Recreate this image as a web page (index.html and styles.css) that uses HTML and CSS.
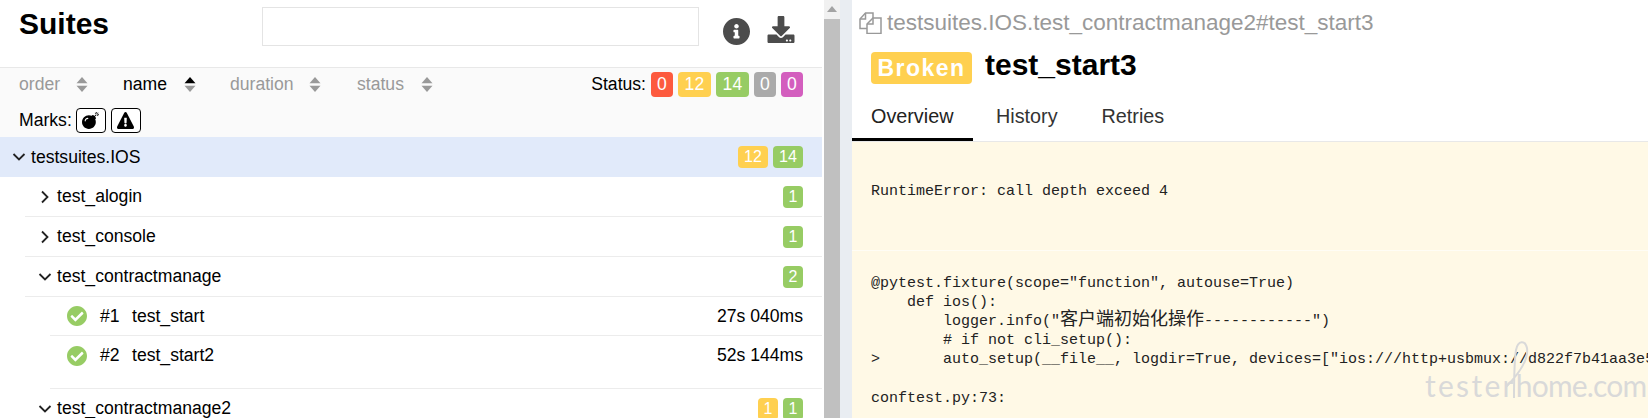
FILE: index.html
```html
<!DOCTYPE html>
<html lang="en">
<head>
<meta charset="utf-8">
<title>Suites</title>
<link rel="stylesheet" href="styles.css">
</head>
<body>
<div class="app">
  <section class="left">
    <header class="head">
      <h1 class="suites">Suites</h1>
      <div class="search"></div>
      <svg class="ic-info" viewBox="8 8 496 496"><path d="M256 8C119.043 8 8 119.083 8 256c0 136.997 111.043 248 248 248s248-111.003 248-248C504 119.083 392.957 8 256 8zm0 110c23.196 0 42 18.804 42 42s-18.804 42-42 42-42-18.804-42-42 18.804-42 42-42zm56 254c0 6.627-5.373 12-12 12h-88c-6.627 0-12-5.373-12-12v-24c0-6.627 5.373-12 12-12h12v-64h-12c-6.627 0-12-5.373-12-12v-24c0-6.627 5.373-12 12-12h64c6.627 0 12 5.373 12 12v100h12c6.627 0 12 5.373 12 12v24z"/></svg>
      <svg class="ic-down" viewBox="0 0 512 512"><path d="M216 0h80c13.3 0 24 10.7 24 24v168h87.7c17.8 0 26.7 21.5 14.1 34.1L269.7 378.3c-7.5 7.5-19.8 7.5-27.3 0L90.1 226.1c-12.6-12.6-3.7-34.1 14.1-34.1H192V24c0-13.3 10.7-24 24-24zm296 376v112c0 13.3-10.7 24-24 24H24c-13.3 0-24-10.7-24-24V376c0-13.3 10.7-24 24-24h146.7l49 49c20.1 20.1 52.5 20.1 72.6 0l49-49H488c13.3 0 24 10.7 24 24zm-124 88c0-11-9-20-20-20s-20 9-20 20 9 20 20 20 20-9 20-20zm64 0c0-11-9-20-20-20s-20 9-20 20 9 20 20 20 20-9 20-20z"/></svg>
    </header>
    <div class="filters">
      <div class="sortrow">
        <span class="sort s-order">order<svg class="arr" viewBox="0 0 12 15"><path d="M6 0l5.500 6.300H.5z"/><path d="M6 15L.5 8.700h11z"/></svg></span>
        <span class="sort s-name active">name<svg class="arr" viewBox="0 0 12 15"><path class="up" d="M6 0l5.500 6.300H.5z"/><path d="M6 15L.5 8.700h11z"/></svg></span>
        <span class="sort s-dur">duration<svg class="arr" viewBox="0 0 12 15"><path d="M6 0l5.500 6.300H.5z"/><path d="M6 15L.5 8.700h11z"/></svg></span>
        <span class="sort s-status">status<svg class="arr" viewBox="0 0 12 15"><path d="M6 0l5.500 6.300H.5z"/><path d="M6 15L.5 8.700h11z"/></svg></span>
        <div class="statuses">
          <span class="status-label">Status:</span>
          <span class="pill big red">0</span>
          <span class="pill big wide yellow">12</span>
          <span class="pill big wide green">14</span>
          <span class="pill big grey">0</span>
          <span class="pill big pink">0</span>
        </div>
      </div>
      <div class="marks">
        <span>Marks:</span>
        <span class="mark"><svg viewBox="0 0 512 512"><path d="M440.5 88.500l-52 52L415 167c9.400 9.400 9.400 24.600 0 33.900l-17.400 17.400c11.800 26.100 18.400 55.100 18.400 85.600 0 114.900-93.100 208-208 208S0 418.900 0 304 93.100 96 208 96c30.500 0 59.500 6.600 85.600 18.400L311 97c9.400-9.400 24.600-9.400 33.900 0l26.500 26.500 52-52 17.100 17zM500 60h-24c-6.600 0-12 5.400-12 12s5.400 12 12 12h24c6.600 0 12-5.400 12-12s-5.400-12-12-12zM440 0c-6.600 0-12 5.400-12 12v24c0 6.600 5.400 12 12 12s12-5.400 12-12V12c0-6.600-5.400-12-12-12zm33.900 55l17-17c4.700-4.700 4.700-12.300 0-17-4.700-4.700-12.300-4.700-17 0l-17 17c-4.700 4.700-4.700 12.300 0 17 4.800 4.700 12.400 4.700 17 0zm-67.800 0c4.700 4.700 12.300 4.700 17 0 4.700-4.700 4.700-12.300 0-17l-17-17c-4.700-4.700-12.300-4.700-17 0-4.700 4.700-4.700 12.300 0 17l17 17zm67.800 34c-4.700-4.700-12.300-4.700-17 0-4.700 4.700-4.700 12.300 0 17l17 17c4.700 4.700 12.300 4.700 17 0 4.700-4.700 4.700-12.300 0-17l-17-17zM112 272c0-35.300 28.700-64 64-64 8.800 0 16-7.200 16-16s-7.200-16-16-16c-52.900 0-96 43.100-96 96 0 8.800 7.200 16 16 16s16-7.200 16-16z"/></svg></span>
        <span class="mark"><svg viewBox="0 0 576 512" preserveAspectRatio="none"><path d="M569.517 440.013C587.975 472.007 564.806 512 527.94 512H48.054c-36.937 0-59.999-40.055-41.577-71.987L246.423 23.985c18.467-32.009 64.72-31.951 83.154 0l239.94 416.028zM288 354c-25.405 0-46 20.595-46 46s20.595 46 46 46 46-20.595 46-46-20.595-46-46-46zm-43.673-165.346l7.418 136c.347 6.364 5.609 11.346 11.982 11.346h48.546c6.373 0 11.635-4.982 11.982-11.346l7.418-136c.375-6.874-5.098-12.654-11.982-12.654h-63.383c-6.884 0-12.356 5.78-11.981 12.654z"/></svg></span>
      </div>
    </div>
    <div class="tree">
      <div class="row root">
        <svg class="chev" viewBox="0 0 14 14"><path d="M1.500 4l5.500 5.500L12.500 4"/></svg>
        <span class="name">testsuites.IOS</span>
        <span class="pill wide yellow">12</span><span class="pill wide green">14</span>
      </div>
      <div class="level1">
        <div class="row">
          <svg class="chev" viewBox="0 0 14 14"><path d="M4 1.500L9.500 7 4 12.500"/></svg>
          <span class="name">test_alogin</span><span class="pill green">1</span>
        </div>
        <div class="row">
          <svg class="chev" viewBox="0 0 14 14"><path d="M4 1.500L9.500 7 4 12.500"/></svg>
          <span class="name">test_console</span><span class="pill green">1</span>
        </div>
        <div class="row">
          <svg class="chev" viewBox="0 0 14 14"><path d="M1.500 4l5.500 5.500L12.500 4"/></svg>
          <span class="name">test_contractmanage</span><span class="pill green">2</span>
        </div>
        <div class="cases">
          <div class="case">
            <svg class="check" viewBox="8 8 496 496"><path d="M504 256c0 136.967-111.033 248-248 248S8 392.967 8 256 119.033 8 256 8s248 111.033 248 248zM227.314 387.314l184-184c6.248-6.248 6.248-16.379 0-22.627l-22.627-22.627c-6.248-6.249-16.379-6.249-22.628 0L216 308.118l-70.059-70.059c-6.248-6.248-16.379-6.248-22.628 0l-22.627 22.627c-6.248 6.248-6.248 16.379 0 22.627l104 104c6.249 6.249 16.379 6.249 22.628.001z"/></svg>
            <span class="num">#1</span><span class="name">test_start</span><span class="time">27s 040ms</span>
          </div>
          <div class="case last">
            <svg class="check" viewBox="8 8 496 496"><path d="M504 256c0 136.967-111.033 248-248 248S8 392.967 8 256 119.033 8 256 8s248 111.033 248 248zM227.314 387.314l184-184c6.248-6.248 6.248-16.379 0-22.627l-22.627-22.627c-6.248-6.249-16.379-6.249-22.628 0L216 308.118l-70.059-70.059c-6.248-6.248-16.379-6.248-22.628 0l-22.627 22.627c-6.248 6.248-6.248 16.379 0 22.627l104 104c6.249 6.249 16.379 6.249 22.628.001z"/></svg>
            <span class="num">#2</span><span class="name">test_start2</span><span class="time">52s 144ms</span>
          </div>
        </div>
        <div class="row">
          <svg class="chev" viewBox="0 0 14 14"><path d="M1.500 4l5.500 5.500L12.500 4"/></svg>
          <span class="name">test_contractmanage2</span><span class="pill yellow">1</span><span class="pill green">1</span>
        </div>
      </div>
    </div>
  </section>
  <div class="scrollbar"><span class="sb-up"></span><span class="sb-thumb"></span></div>
  <div class="gutter"></div>
  <section class="right">
    <div class="path">
      <svg class="ic-copy" viewBox="0 0 23 22"><path d="M8 16.500H1V7l5.500-6H14v5"/><path d="M6.500 1v6H1"/><path d="M14 6h8v15.500H8V12z"/><path d="M14 6v6H8"/></svg>
      <span>testsuites.IOS.test_contractmanage2#test_start3</span>
    </div>
    <div class="titlebar">
      <span class="broken">Broken</span>
      <h2 class="title">test_start3</h2>
    </div>
    <nav class="tabs">
      <span class="tab on">Overview</span>
      <span class="tab">History</span>
      <span class="tab">Retries</span>
    </nav>
    <div class="message">
      <pre class="code first">RuntimeError: call depth exceed 4</pre>
      <pre class="code second">@pytest.fixture(scope="function", autouse=True)
    def ios():
        logger.info("<span class="cjk">客户端初始化操作</span>------------")
        # if not cli_setup():
&gt;       auto_setup(__file__, logdir=True, devices=["ios:///http+usbmux://d822f7b41aa3e5c2</pre>
      <pre class="code third">conftest.py:73:</pre>
      <div class="watermark"><svg class="wm-loop" viewBox="0 0 25 60"><path d="M0 48C10 38 24 22 22 8 20 0 13 0 11 10 9 24 9 42 9 58"/></svg><span>tester</span><span class="wm-tail">home.com</span></div>
    </div>
  </section>
</div>
</body>
</html>
```
FILE: styles.css
```css
* { box-sizing: border-box; }
html, body { margin: 0; height: 100%; overflow: hidden; }
body {
  font-family: "Liberation Sans", Arial, sans-serif;
  font-size: 17.6px;
  color: #000;
  background: #fff;
}
.app { display: flex; height: 418px; width: 1648px; }

/* left pane */
.left { width: 822px; flex: none; overflow: hidden; }
.head { height: 67px; display: flex; align-items: flex-start; position: relative; }
.suites { margin: 6px 0 0 19px; width: 243px; font-size: 30px; line-height: 36px; font-weight: bold; }
.search { width: 437px; height: 39px; margin-top: 7px; border: 1px solid #e4e4e4; background: #fff; flex: none; }
.ic-info { width: 27px; height: 27px; margin: 18px 0 0 24px; fill: #4c4c4c; flex: none; }
.ic-down { width: 28px; height: 27px; margin: 16px 0 0 17px; fill: #4c4c4c; flex: none; }

.filters { height: 70px; background: #fafafa; border-top: 1px solid #e8e8e8; padding-top: 3px; }
.sortrow { display: flex; align-items: center; height: 26px; position: relative; }
.sort { display: inline-flex; align-items: center; color: #999; flex: none; }
.sort.active { color: #000; }
.arr { width: 12px; height: 15px; fill: #999; margin-left: 16px; flex: none; }
.arr .up { fill: #000; }
.s-order { margin-left: 19px; width: 104px; }
.s-name { width: 107px; }
.s-name .arr { margin-left: 17px; }
.s-dur { width: 127px; }
.s-dur .arr { margin-left: 15px; }
.s-status .arr { margin-left: 17px; }
.statuses { margin-left: auto; margin-right: 19px; display: flex; align-items: center; }
.pill {
  display: inline-flex; align-items: center; justify-content: center;
  height: 22px; width: 20px; border-radius: 4px;
  color: #fff; font-size: 16px; margin-left: 5px; letter-spacing: .2px;
}
.pill.wide { width: 30px; }
.pill.big { height: 25px; width: 22px; font-size: 17.600px; }
.pill.big.wide { width: 33px; }
.red { background: #fd5a3e; }
.yellow { background: #ffd050; }
.green { background: #97cc64; }
.grey { background: #aaa; }
.pink { background: #d35ebe; }

.marks { display: flex; align-items: center; margin: 10px 0 0 19px; height: 26px; }
.mark {
  width: 30px; height: 25px; border: 1px solid #000; border-radius: 4px; margin-left: 4px;
  display: flex; align-items: center; justify-content: center; background: #fff;
}
.mark + .mark { margin-left: 5px; }
.mark svg { width: 17px; height: 17px; }

.row { display: flex; align-items: center; height: 40px; padding-right: 19px; }
.row .name { flex: 1; margin-left: 5px; }
.root { background: #e1eafa; padding-left: 12px; height: 40px; }
.chev { width: 14px; height: 14px; fill: none; stroke: #222; stroke-width: 1.800; flex: none; }
.level1 { margin-left: 25px; }
.level1 > .row { padding-left: 13px; border-bottom: 1px solid #ececec; }
.cases { margin-left: 25px; padding-bottom: 13px; border-bottom: 1px solid #ececec; }
.case { display: flex; align-items: center; height: 39px; padding: 0 19px 0 17px; border-bottom: 1px solid #ececec; }
.case.last { border-bottom: 0; }
.check { width: 20px; height: 20px; fill: #97cc64; flex: none; }
.num { margin-left: 13px; width: 32px; flex: none; }
.case .name { flex: 1; margin-left: 0; }

/* scrollbar */
.scrollbar { width: 16px; margin-left: 2px; flex: none; display: flex; flex-direction: column; background: #f1f1f1; }
.sb-up { height: 19px; flex: none; display: flex; justify-content: center; padding-top: 6px; background: #f1f1f1; }
.sb-up::before { content: ""; width: 0; height: 0; border: 5px solid transparent; border-top: 0; border-bottom: 6px solid #a3a3a3; }
.sb-thumb { flex: 1; background: #c0c0c0; }
.gutter { width: 12px; flex: none; background: #e9edf2; }

/* right pane */
.right { flex: 1; min-width: 0; overflow: hidden; }
.path { display: flex; align-items: center; height: 46px; color: #999; font-size: 22.500px; padding-left: 7px; white-space: nowrap; }
.ic-copy { width: 23px; height: 22px; fill: none; stroke: #999; stroke-width: 1.500; margin-right: 5px; flex: none; }
.titlebar { display: flex; align-items: center; height: 41px; padding-left: 19px; }
.broken {
  background: #ffd050; color: #fff; font-weight: bold; font-size: 23px; letter-spacing: 1.500px;
  height: 32px; width: 101px; border-radius: 4px; display: flex; align-items: center; justify-content: center;
  margin-top: 3px;
}
.title { margin: -3px 0 0 13px; font-size: 30px; line-height: 36px; font-weight: bold; }
.tabs { display: flex; height: 55px; border-bottom: 1px solid #e8e8e8; font-size: 19.800px; line-height: 22px; }
.tab { padding: 18px 22px 0; color: #333; height: 54px; }
.tab.on { width: 121px; padding-left: 19px; color: #222; border-bottom: 3px solid #000; }
.tab:nth-child(2) { padding-left: 23px; }
.message { background: #fff9e6; height: 276px; position: relative; overflow: hidden; }
.code {
  margin: 0; font-family: "Liberation Mono", "Courier New", monospace; font-size: 15px; line-height: 19px;
  padding-left: 19px; color: #222; white-space: pre;
}
.first { height: 109px; padding-top: 40px; border-bottom: 1px solid #fffdf5; }
.second { padding-top: 23px; }
.third { padding-top: 20px; }
.cjk { font-family: "Noto Sans CJK SC", sans-serif; font-size: 18px; line-height: 0; }
.watermark {
  position: absolute; left: 573px; top: 228px; color: #d9d9d9; white-space: nowrap;
  font-family: "Lato", sans-serif; font-weight: 400; font-size: 30px; letter-spacing: 2.300px; line-height: 30px;
}
.wm-tail { letter-spacing: -.8px; }
.wm-loop { position: absolute; left: 80px; top: -30px; width: 25px; height: 60px; fill: none; stroke: #d9d9d9; stroke-width: 2; }
```
